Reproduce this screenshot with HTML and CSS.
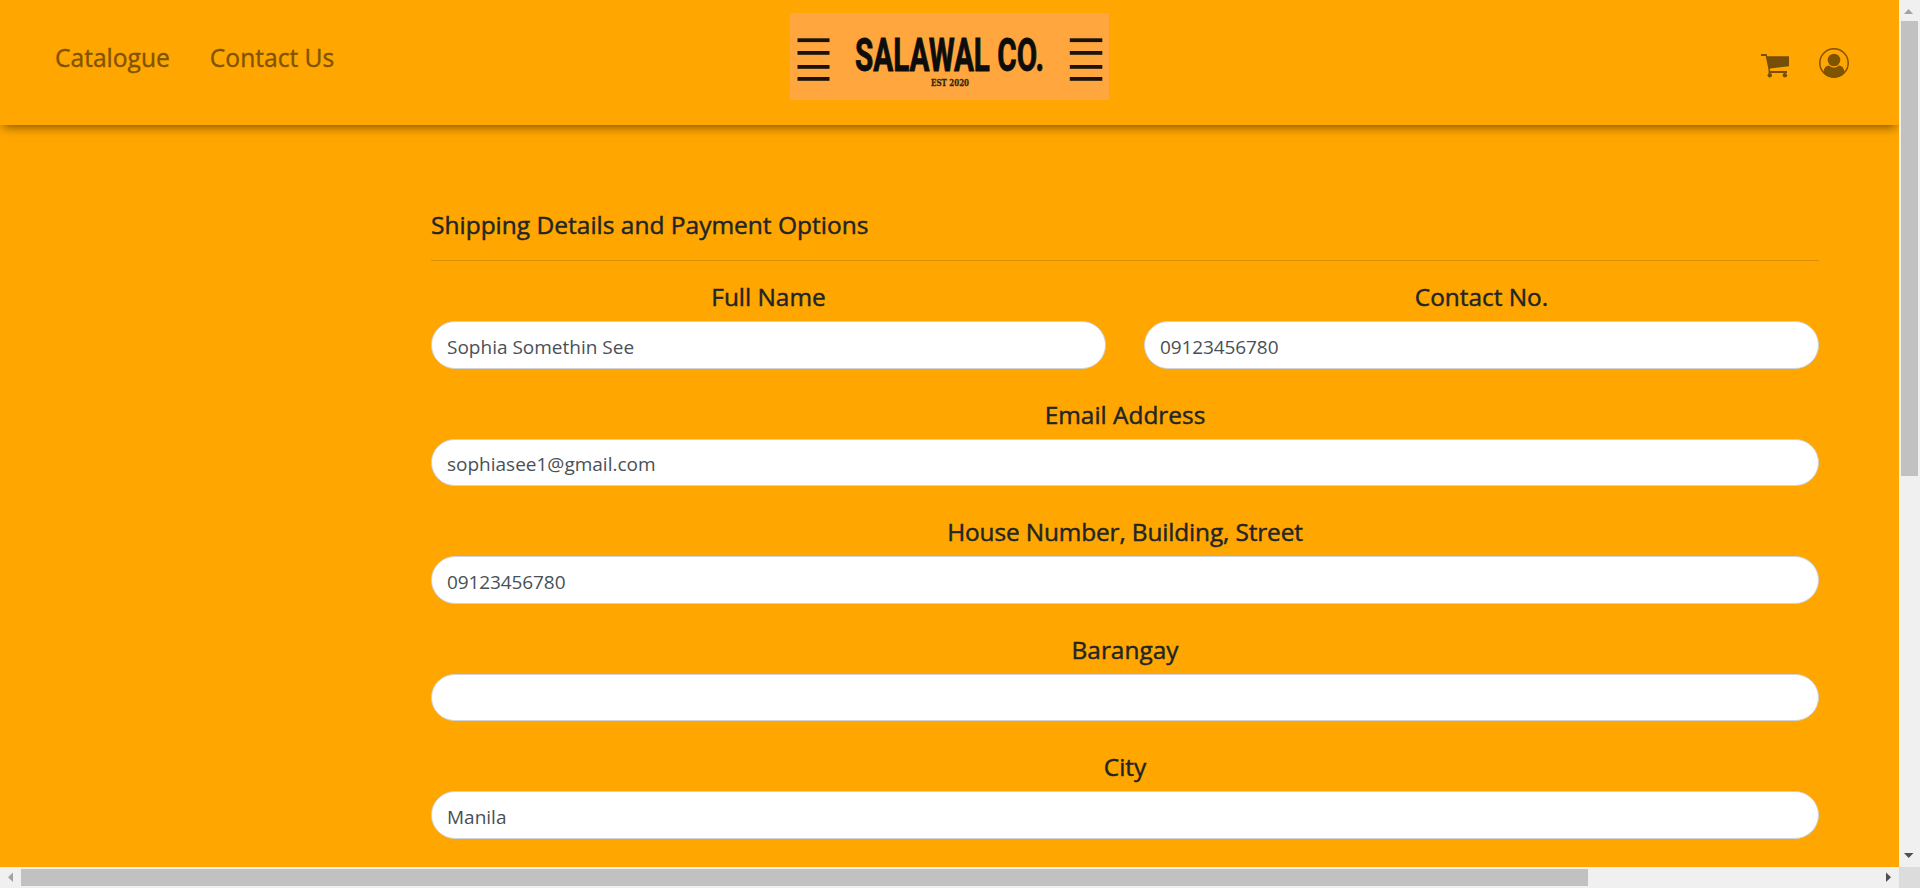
FILE: index.html
```
<!DOCTYPE html>
<html lang="en">
<head>
<meta charset="utf-8">
<title>Salawal Co.</title>
<link rel="stylesheet" href="styles.css">
</head>
<body>
<div class="window">
  <div class="viewport">
    <header class="navbar">
      <nav class="nav-links">
        <a class="link-catalogue">Catalogue</a>
        <a class="link-contact">Contact Us</a>
      </nav>
      <svg class="logo" width="319" height="87" viewBox="0 0 319 87">
        <rect width="319" height="87" fill="#ffa63f"/>
        <g fill="#1a130a">
          <rect x="7.5" y="25.3" width="32" height="3.8"/><rect x="7.5" y="38" width="32" height="3.8"/><rect x="7.5" y="52" width="32" height="3.8"/><rect x="7.5" y="64" width="32" height="3.8"/>
          <rect x="279.8" y="25.3" width="32.5" height="3.8"/><rect x="279.8" y="38" width="32.5" height="3.8"/><rect x="279.8" y="52" width="32.5" height="3.8"/><rect x="279.8" y="64" width="32.5" height="3.8"/>
        </g>
        <text class="logo-name" x="65" y="58" textLength="189" lengthAdjust="spacingAndGlyphs">SALAWAL CO.</text>
        <text class="logo-est" x="141" y="73" textLength="38" lengthAdjust="spacingAndGlyphs">EST 2020</text>
      </svg>
      <div class="nav-icons">
        <svg class="cart" width="28" height="24" viewBox="0 0 28 24" fill="#774e08">
          <path d="M0 0H5.6L6.2 2.2H28V12.2L9.2 14.4L8.9 17H26V19H7.5V15.6L4.7 1.9H0Z"/>
          <circle cx="8.8" cy="21.2" r="2.2"/><circle cx="23.9" cy="21.2" r="2.2"/>
        </svg>
        <svg width="30" height="30" viewBox="0 0 30 30">
          <circle cx="15" cy="15" r="14.2" fill="none" stroke="#805300" stroke-width="1.5"/>
          <circle cx="15" cy="12" r="6.3" fill="#805300"/>
          <path d="M4.4 24.2C5 19.5 7 17.6 10.2 17.4C12.8 20.1 17.2 20.1 19.8 17.4C23 17.6 25 19.5 25.6 24.2C23 28 19.3 29.7 15 29.7S7 28 4.4 24.2Z" fill="#805300"/>
        </svg>
      </div>
    </header>
    <main class="form">
      <h4 class="title">Shipping Details and Payment Options</h4>
      <div class="row">
        <label class="field"><span class="label">Full Name</span><input value="Sophia Somethin See"></label>
        <label class="field"><span class="label">Contact No.</span><input class="digits" value="09123456780"></label>
      </div>
      <label class="field"><span class="label">Email Address</span><input value="sophiasee1@gmail.com"></label>
      <label class="field"><span class="label label-long">House Number, Building, Street</span><input class="digits" value="09123456780"></label>
      <label class="field"><span class="label">Barangay</span><input value=""></label>
      <label class="field"><span class="label">City</span><input value="Manila"></label>
    </main>
  </div>
  <div class="scroll-y">
    <svg width="21" height="21"><path d="M5 14L9.5 9L14 14Z" fill="#a3a3a3"/></svg>
    <div class="thumb-y"></div>
    <svg class="end" width="21" height="21"><path d="M5 7H14.5L9.7 12Z" fill="#505050"/></svg>
  </div>
  <div class="scroll-x">
    <svg width="21" height="21"><path d="M13 5.5V15L8 10.2Z" fill="#a3a3a3"/></svg>
    <div class="thumb-x"></div>
    <svg class="end" width="21" height="21"><path d="M8 5.5V15L13 10.2Z" fill="#505050"/></svg>
  </div>
  <div class="corner"></div>
</div>
</body>
</html>
```
FILE: styles.css
```
* { box-sizing: border-box; }
body { margin: 0; overflow: hidden; font-family: "Open Sans", "Noto Sans", sans-serif; color: #212529; }
svg { display: block; flex: none; }
.window { display: grid; grid-template-columns: 1899px 21px; grid-template-rows: 867px 21px; width: 1920px; height: 888px; }
.viewport { background: #ffa600; overflow: hidden; }
.navbar { height: 125px; display: grid; grid-template-columns: 735px 319px 1fr; align-items: start; padding: 13px 50px 0 55px; box-shadow: 0 5px 10px -3px rgba(0,0,0,.5); }
.nav-links { display: flex; gap: 40px; padding-top: 28px; font-size: 24.6px; line-height: 34px; font-weight: 500; color: #805300; -webkit-text-stroke: .35px #805300; }
.nav-links a { white-space: nowrap; }
.logo { overflow: visible; }
.logo-name { font: 700 46px Roboto, sans-serif; fill: #0d0d0b; stroke: #0d0d0b; stroke-width: .9; }
.logo-est { font: 700 8.5px "DejaVu Serif", serif; fill: #38260f; stroke: #38260f; stroke-width: .3; }
.nav-icons { display: flex; justify-content: flex-end; gap: 30px; padding-top: 35px; }
.cart { margin-top: 6px; }
.form { width: 1388px; margin-left: 431px; padding-top: 83px; }
.title { margin: 0 0 22.25px; height: 53px; border-bottom: 1px solid #db8e00; font-size: 24.5px; font-weight: 500; line-height: 34px; white-space: nowrap; -webkit-text-stroke: .45px #212529; }
.row { display: grid; grid-template-columns: 675px 675px; gap: 38px; }
.field { display: flex; flex-direction: column; margin-bottom: 32px; }
.label { height: 38px; line-height: 27px; text-align: center; font-size: 24.4px; font-weight: 500; white-space: nowrap; -webkit-text-stroke: .45px #212529; }
.label-long { letter-spacing: -.13px; }
input { display: block; width: 100%; height: 47.5px; border: 1px solid #ced4da; border-radius: 25px; padding: 3px 15px 0; background: #fff; color: #495057; font: 400 19px "Open Sans", "Noto Sans", sans-serif; }
.digits { letter-spacing: -.1px; }
.scroll-y { background: #f0f0f0; display: flex; flex-direction: column; }
.scroll-x { background: #f0f0f0; display: flex; align-items: center; }
.thumb-y { width: 17px; height: 455px; margin-left: 2px; background: #c1c1c1; }
.thumb-x { width: 1567px; height: 17px; background: #c1c1c1; }
.scroll-y .end { margin-top: auto; }
.scroll-x .end { margin-left: auto; }
.corner { background: #dcdcdc; }
```
